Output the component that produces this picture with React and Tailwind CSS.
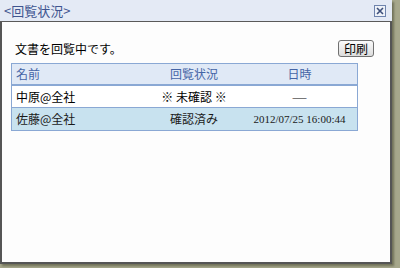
import React from 'react';

const rows = [
  { name: '中原@全社', status: '※ 未確認 ※', date: '─', selected: false },
  { name: '佐藤@全社', status: '確認済み', date: '2012/07/25 16:00:44', selected: true },
];

export default function App() {
  return (
    <div className="w-[400px] h-[268px] bg-[#a6a78b] overflow-hidden" style={{ fontFamily: '"Noto Sans CJK JP", "Liberation Sans", sans-serif' }}>
      <div className="w-[392px] h-[264px] flex flex-col bg-[#fdfdfd] shadow-[2px_2px_2px_rgba(60,60,40,0.5)]">
        {/* タイトルバー */}
        <div className="h-[22px] flex items-center justify-between pl-[4px] pr-[5px] bg-[#e4eaf5] border-b border-[#5a5a5a]">
          <span className="text-[13px] leading-none text-[#3f5590]">&lt;回覧状況&gt;</span>
          <svg width="12" height="12" viewBox="0 0 12 12" className="mr-[1px]">
            <rect x="0.5" y="0.5" width="11" height="11" fill="#eef2f8" stroke="#6f84ad" />
            <path d="M3 3 L9 9 M9 3 L3 9" stroke="#3d4f7a" strokeWidth="1.6" />
          </svg>
        </div>

        {/* 本文 */}
        <div className="flex-1 border-l-2 border-r-2 border-b-2 border-[#555555] px-[9px]">
          <div className="flex items-center justify-between h-[41px] pt-[12px] pl-[4px] pr-[7px]">
            <span className="text-[12px] text-black">文書を回覧中です。</span>
            <button className="w-[36px] h-[17px] text-[12px] leading-none text-black border border-[#707070] rounded-[3px] bg-gradient-to-b from-[#fbfbfb] to-[#dcdcdc] flex items-center justify-center">
              印刷
            </button>
          </div>

          <div className="w-[347px] border border-[#8aa8d4] text-[12px]">
            <div className="grid grid-cols-[134px_96px_1fr] h-[22px] items-center bg-[#e0e9f6] text-[#4565a6] border-b-2 border-[#8aa8d4]">
              <span className="pl-[4px]">名前</span>
              <span className="text-center">回覧状況</span>
              <span className="text-center">日時</span>
            </div>
            {rows.map((r, i) => (
              <div
                key={r.name}
                className={
                  r.selected
                    ? 'grid grid-cols-[134px_96px_1fr] h-[22px] items-center bg-[#c8e2ef] text-[#1a1a1a]'
                    : 'grid grid-cols-[134px_96px_1fr] h-[22px] items-center bg-white text-black border-b border-[#8aa8d4]'
                }
              >
                <span className="pl-[4px]">{r.name}</span>
                <span className="text-center">{r.status}</span>
                {i === 1 ? (
                  <span className="text-center text-[11px]" style={{ fontFamily: '"Liberation Serif", serif' }}>{r.date}</span>
                ) : (
                  <span className="text-center text-[14px] font-bold leading-none">{r.date}</span>
                )}
              </div>
            ))}
          </div>
        </div>
      </div>
    </div>
  );
}
